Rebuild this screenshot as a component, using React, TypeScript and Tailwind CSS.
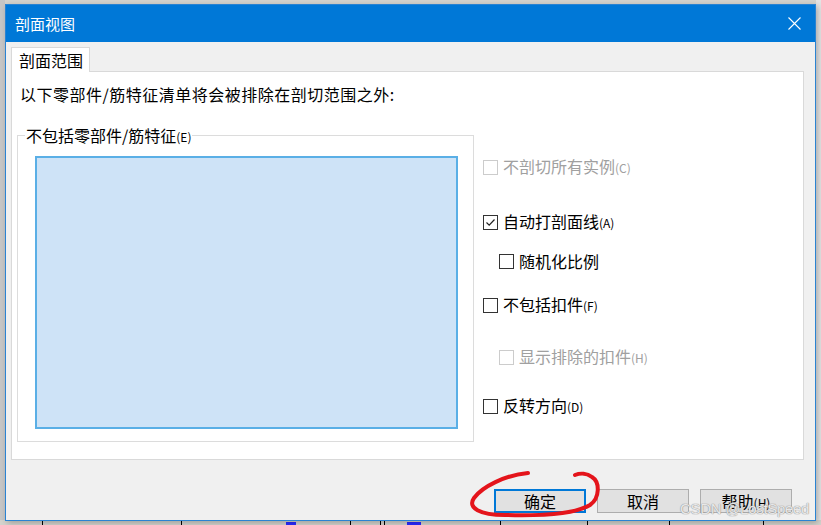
import React from "react";

const FONT = "font-['Noto_Sans_CJK_SC','Microsoft_YaHei',sans-serif]";

function Check({ checked = false, disabled = false }: { checked?: boolean; disabled?: boolean }) {
  return (
    <div
      className={`w-[15px] h-[15px] shrink-0 bg-white border ${disabled ? "border-[#cccccc]" : "border-[#333333]"} flex items-center justify-center`}
    >
      {checked && (
        <svg width="11" height="11" viewBox="0 0 11 11">
          <polyline points="1.5,5.5 4.2,8.2 9.5,2.5" fill="none" stroke="#222" strokeWidth="1.2" />
        </svg>
      )}
    </div>
  );
}

function Row({
  label,
  key2,
  checked,
  disabled,
  className = "",
}: {
  label: string;
  key2?: string;
  checked?: boolean;
  disabled?: boolean;
  className?: string;
}) {
  return (
    <div className={`flex items-center h-[20px] gap-[5px] ${className}`}>
      <Check checked={checked} disabled={disabled} />
      <span className={`text-[16px] leading-[20px] whitespace-nowrap ${disabled ? "text-[#a0a0a0]" : "text-black"}`}>
        {label}
        {key2 && <span className="text-[12px]">{key2}</span>}
      </span>
    </div>
  );
}

export default function App() {
  const ticks = [42, 181, 350, 380, 384, 500, 587, 669, 763];
  return (
    <div className={`relative w-[821px] h-[525px] overflow-hidden bg-[#d4d3cd] pt-[4px] pl-[5px] ${FONT}`}>
      <div className="absolute left-0 top-0 w-[5px] h-[520px] bg-[#c6c6c6]" />
      <div className="absolute right-0 top-0 w-[5px] h-[520px] bg-[#e4e4e4]" />
      {ticks.map((x) => (
        <div key={x} className="absolute top-[521px] w-[1px] h-[4px] bg-black" style={{ left: x }} />
      ))}
      <div className="absolute top-[522px] left-[286px] w-[10px] h-[3px] bg-[#2a2aff]" />
      <div className="absolute top-[522px] left-[407px] w-[14px] h-[3px] bg-[#2a2aff]" />

      {/* window */}
      <div className="relative w-[811px] h-[517px] flex flex-col border border-[#2a83d2] bg-[#f0f0f0] shadow-[2px_2px_6px_rgba(0,0,0,0.25)]">
        {/* title bar */}
        <div className="h-[37px] shrink-0 bg-[#0078d7] flex items-center justify-between pl-[9px] pr-[14px]">
          <span className="text-white text-[15px] leading-[20px]">剖面视图</span>
          <svg width="13" height="13" viewBox="0 0 13 13">
            <path d="M0.5 0.5 L12.5 12.5 M12.5 0.5 L0.5 12.5" stroke="white" strokeWidth="1.1" />
          </svg>
        </div>

        {/* content */}
        <div className="flex-1 flex flex-col pl-[5px] pr-[11px] pt-[5px]">
          <div className="self-start relative z-10 -mb-px w-[79px] h-[25px] bg-white border border-b-0 border-[#d9d9d9] pl-[7px] pt-[1px] text-[16px] leading-[22px] text-black">
            剖面范围
          </div>
          <div className="h-[389px] bg-white border border-[#d9d9d9] flex flex-col">
            <div className="mt-[12px] ml-[8px] text-[16px] leading-[20px] text-black whitespace-nowrap tracking-[0.5px]">
              以下零部件/筋特征清单将会被排除在剖切范围之外:
            </div>
            <div className="flex mt-[31px] pl-[5px]">
              <div className="relative w-[457px] h-[307px] border border-[#dcdcdc]">
                <span className="absolute left-[7px] -top-[11px] bg-white px-[1px] text-[16px] leading-[20px] text-black whitespace-nowrap">
                  不包括零部件/筋特征<span className="text-[12px]">(E)</span>
                </span>
                <div className="mt-[20px] ml-[17px] w-[423px] h-[273px] border-2 border-[#5aafe6] bg-[#cee3f7]" />
              </div>
              <div className="ml-[9px] pt-[22px] flex flex-col">
                <Row label="不剖切所有实例" key2="(C)" disabled />
                <Row label="自动打剖面线" key2="(A)" checked className="mt-[35px]" />
                <Row label="随机化比例" className="mt-[19px] ml-[16px]" />
                <Row label="不包括扣件" key2="(F)" className="mt-[24px]" />
                <Row label="显示排除的扣件" key2="(H)" disabled className="mt-[32px] ml-[16px]" />
                <Row label="反转方向" key2="(D)" className="mt-[29px]" />
              </div>
            </div>
          </div>

          <div className="flex justify-end gap-[11px] mt-[29px] pr-[12px]">
            <button className="w-[92px] h-[24px] bg-[#e1e1e1] border-2 border-[#0078d7] text-[16px] leading-[20px] text-black">
              确定
            </button>
            <button className="w-[92px] h-[24px] bg-[#e1e1e1] border border-[#adadad] text-[16px] leading-[22px] text-black">
              取消
            </button>
            <button className="w-[92px] h-[24px] bg-[#e1e1e1] border border-[#adadad] text-[16px] leading-[22px] text-black">
              帮助<span className="text-[12px]">(H)</span>
            </button>
          </div>
        </div>
      </div>

      {/* watermark */}
      <div className="absolute left-[680px] top-[500px] font-['Liberation_Sans',sans-serif] text-[15px] leading-[18px] tracking-[-0.3px] text-white/80 [text-shadow:0_0_1px_#8a8a8a,0_0_1px_#8a8a8a] whitespace-nowrap">
        CSDN @LostSpeed
      </div>

      {/* red annotation */}
      <svg className="absolute left-0 top-0 pointer-events-none" width="821" height="525" viewBox="0 0 821 525">
        <path
          d="M528,473 C505,475 482,487 474,498 C467,508 480,515 505,515 C540,516 575,514 590,505 C600,498 600,482 592,477 C587,473 580,473 575,475"
          fill="none"
          stroke="#e4141b"
          strokeWidth="4"
          strokeLinecap="round"
        />
      </svg>
    </div>
  );
}
